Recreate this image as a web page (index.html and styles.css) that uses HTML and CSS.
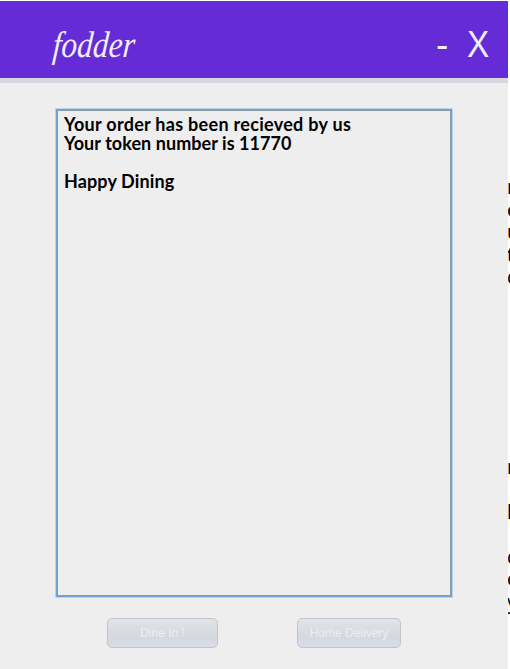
FILE: index.html
```html
<!DOCTYPE html>
<html lang="en">
<head>
<meta charset="utf-8">
<title>fodder</title>
<link rel="stylesheet" href="styles.css">
</head>
<body>
<div class="app">
  <main class="window">
    <header class="header">
      <h1 class="brand"><span class="brand-text">fodder</span></h1>
      <span class="minimize">-</span>
      <span class="close">X</span>
    </header>
    <section class="message">
      <p class="line order">Your order has been recieved by us</p>
      <p class="line token">Your token number is 11770</p>
      <p class="line">&nbsp;</p>
      <p class="line dining">Happy Dining</p>
    </section>
    <div class="actions">
      <button class="button dine" disabled><span>Dine In !</span></button>
      <button class="button delivery" disabled><span>Home Delivery</span></button>
    </div>
  </main>
  <aside class="behind">
    <div class="group first"><span>n</span><span>e</span><span>u</span><span>t</span><span>c</span></div>
    <div class="group second"><span>n</span><span></span><span>h</span><span></span><span>c</span><span>e</span><span>y</span></div>
  </aside>
</div>
</body>
</html>
```
FILE: styles.css
```css
* { box-sizing: border-box; }
body { margin: 0; background: #fff; overflow: hidden; }
h1, p { margin: 0; font-weight: normal; }
.app { display: flex; width: 510px; height: 669px; padding-top: 1px; overflow: hidden; }
.window { width: 508px; height: 668px; background: #eee; flex: none; }
.header {
  display: flex;
  height: 82px;
  padding-left: 53px;
  background: #652bd6;
  border-bottom: 5px solid #d6d9df;
  color: #f0eef8;
}
.brand { width: 383px; padding-top: 23px; font: italic 37px/42px "Liberation Serif", serif; }
.brand-text { display: inline-block; transform: scaleX(0.85) skewX(-5deg); transform-origin: left; }
.minimize, .close { font: 37px/42px "Liberation Sans", sans-serif; padding-top: 23px; }
.minimize { width: 31px; }
.close { transform: scaleX(0.9); transform-origin: left; }
.message {
  width: 398px;
  height: 490px;
  margin: 25px 0 0 55px;
  padding: 6px 6px;
  border: 1px solid #bdd4e8;
  box-shadow: inset 0 0 0 1px #6ea3d2, inset 0 0 0 2px #8c9bac;
  color: #000;
}
.line { padding-left: 2px; font: bold 18px/19px Lato, sans-serif; white-space: pre; height: 19px; }
.order { letter-spacing: 0.29px; }
.token { letter-spacing: 0.06px; }
.dining { letter-spacing: 0.12px; }
.actions { display: flex; gap: 79px; padding: 20px 0 0 107px; }
.button {
  height: 30px;
  padding: 0;
  border: 1px solid #c2c4cc;
  border-radius: 5px;
  background: linear-gradient(#e0e3e7, #d5d8df 65%, #dadde6);
  color: #eee;
  font: 12px/28px "Liberation Sans", sans-serif;
}
.dine { width: 111px; }
.delivery { width: 104px; }
.behind { width: 2px; overflow: hidden; color: #000; font: 19px/22.5px "Noto Sans", sans-serif; }
.group { display: flex; flex-direction: column; width: 16px; margin-left: -1px; }
.group span { height: 22.5px; }
.first { padding-top: 175px; }
.second { padding-top: 167px; }
```
